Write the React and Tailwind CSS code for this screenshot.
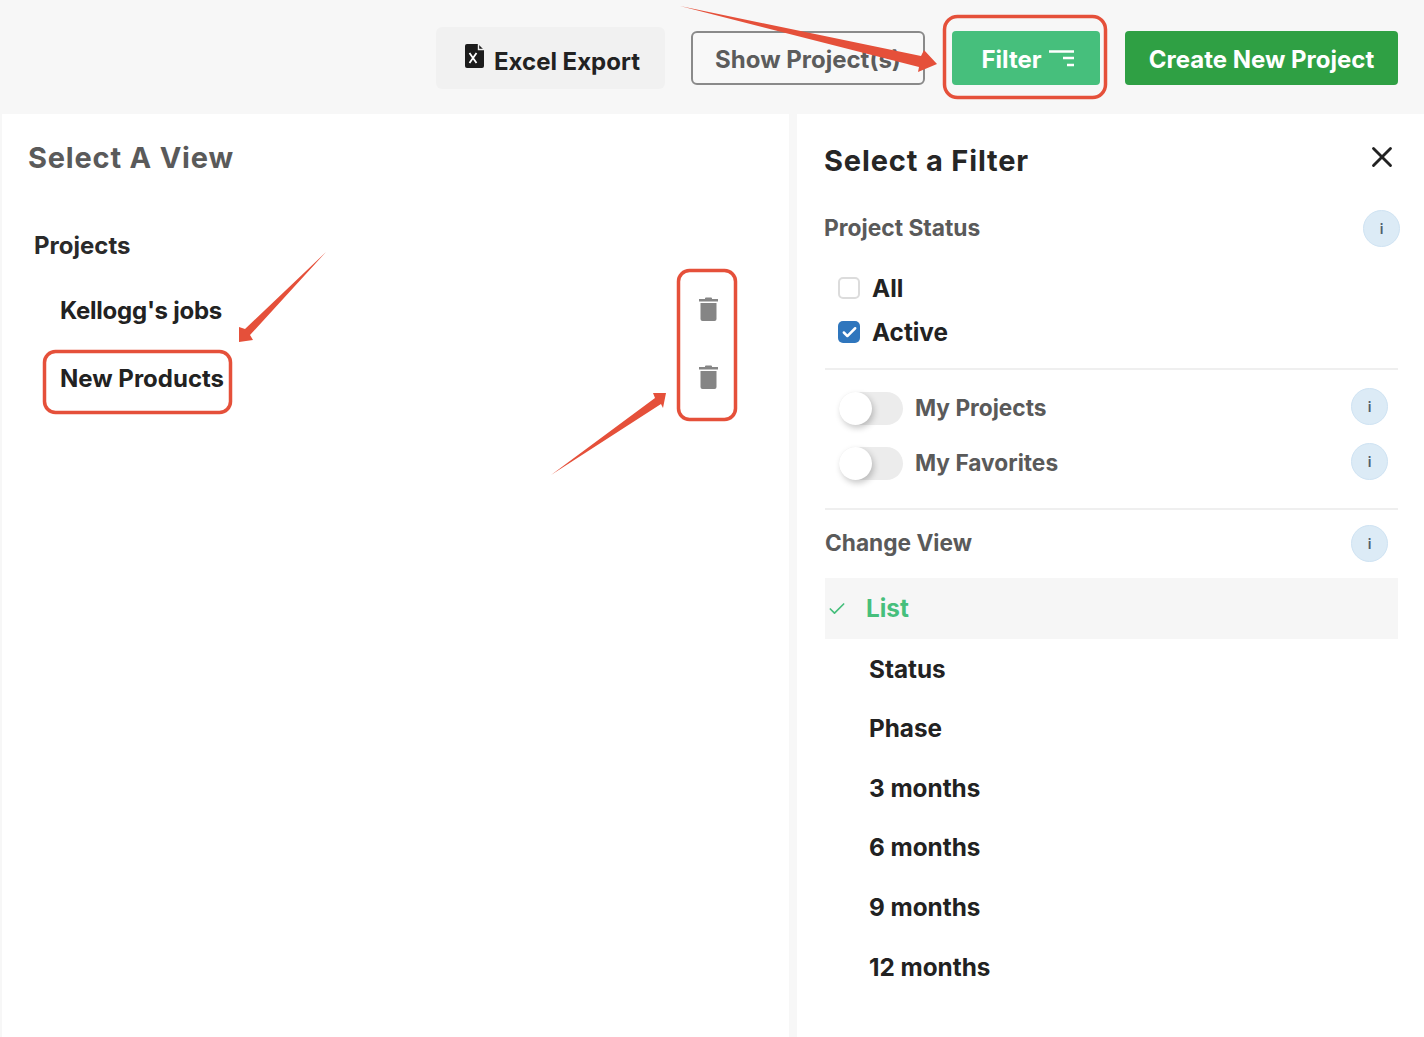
import { Check, X } from "lucide-react";

const views = ["Status", "Phase", "3 months", "6 months", "9 months", "12 months"];

function ExcelIcon() {
  return (
    <svg width="22" height="26" viewBox="0 0 22 26" className="mr-2 -mt-[12px]">
      <path d="M3 1h11l6 6v16a2 2 0 0 1-2 2H3a2 2 0 0 1-2-2V3a2 2 0 0 1 2-2z" fill="#1c1c1c" />
      <path d="M14.5 1v5.5H20" fill="none" stroke="#f1f1f1" strokeWidth="1.4" />
      <path d="M5.500 10l7 10M12.500 10l-7 10" stroke="#fff" strokeWidth="1.8" fill="none" />
    </svg>
  );
}

function FilterIcon() {
  return (
    <svg width="25" height="17" viewBox="0 0 25 17" className="ml-[7px] -mt-[2px]">
      <path d="M0 1.500h25M14 8h11M18 15h7" stroke="#fff" strokeWidth="2.400" fill="none" />
    </svg>
  );
}

function TrashIcon() {
  return (
    <svg width="21" height="26" viewBox="0 0 21 26" className="-mt-[4px]">
      <path d="M7 2.5a1 1 0 0 1 1-1h5a1 1 0 0 1 1 1V3h6v2.500H1V3h6z" fill="#858585" />
      <path d="M2.500 7h16v16a2 2 0 0 1-2 2h-12a2 2 0 0 1-2-2z" fill="#858585" />
    </svg>
  );
}

function InfoDot({ className = "" }) {
  return (
    <div className={`w-[37px] h-[37px] rounded-full bg-[#dcebf6] border border-[#cfe3f3] flex items-center justify-center text-[14px] leading-none text-[#4f5f6c] font-semibold ${className}`}>
      i
    </div>
  );
}

function ToggleRow({ label }) {
  return (
    <div className="flex items-center h-[37px]">
      <div className="relative mt-[4px] ml-[14px] w-[64px] h-[33px] rounded-full bg-[#ececec]">
        <div className="absolute left-0 top-0 w-[33px] h-[33px] rounded-full bg-white shadow-[2px_3px_6px_rgba(0,0,0,0.22)]" />
      </div>
      <span className="ml-3 mt-[4px] text-[22.700px] font-[650] text-[#5a5a5a]">{label}</span>
      <InfoDot className="ml-auto mr-[10px]" />
    </div>
  );
}

// red marks someone drew on top of the screenshot
function Annotations() {
  return (
    <svg width="1424" height="1037" viewBox="0 0 1424 1037" className="absolute left-0 top-0 pointer-events-none">
      <g fill="none" stroke="#e5503a" strokeWidth="3.500">
        <rect x="944.500" y="16.500" width="161" height="81" rx="13" />
        <rect x="44.500" y="351.500" width="186" height="61" rx="11" />
        <rect x="678.500" y="270.500" width="57" height="149" rx="11" />
      </g>
      <g fill="#e5503a">
        <polygon points="680,6 921,56 924,50 937,64 918,72 919,67" />
        <polygon points="326,252 245,329 239,327 239,342 253,340 250,335" />
        <polygon points="551,475 655,398 653,393 666,393 663,408 661,404" />
      </g>
    </svg>
  );
}

export default function App() {
  return (
    <div className="relative w-[1424px] h-[1037px] overflow-hidden bg-[#f7f7f7] font-['Inter',sans-serif] text-[#1f1f1f]">
      <header className="h-[114px] flex items-center justify-end pr-[26px]">
        <button className="flex items-center justify-center w-[229px] h-[62px] mt-[2px] pt-2 pl-[3px] rounded-md bg-[#f1f1f1] text-[24px] font-[650] text-[#222]">
          <ExcelIcon />
          Excel Export
        </button>
        <button className="ml-[26px] w-[234px] h-[54px] mt-[2px] pt-[3px] rounded-md border-2 border-[#8a8a8a] bg-[#f8f8f8] text-[24px] font-bold text-[#5c5c5c]">
          Show Project(s)
        </button>
        <button className="ml-[27px] pl-[3px] pt-[3px] flex items-center justify-center w-[148px] h-[54px] mt-[2px] rounded-sm bg-[#46bf7c] text-[24px] font-bold text-white">
          Filter
          <FilterIcon />
        </button>
        <button className="ml-[25px] w-[273px] h-[54px] mt-[2px] pt-[3px] rounded-sm bg-[#2fa044] text-[24px] font-bold text-white">
          Create New Project
        </button>
      </header>

      <div className="flex h-[923px] pl-[2px]">
        <section className="w-[787px] bg-white">
          <h2 className="mt-[23px] ml-[26px] text-[29px] leading-[42px] font-bold tracking-[0.8px] text-[#5a5a5a]">
            Select A View
          </h2>
          <div className="mt-[49px] ml-[32px] text-[24px] leading-[36px] font-[650] text-[#2a2a2a]">Projects</div>
          <div className="mt-[29px] flex items-center justify-between h-[36px] pl-[58px] pr-[70px] text-[24px] font-[650] text-[#222]">
            <span className="tracking-[-0.25px]">Kellogg's jobs</span>
            <TrashIcon />
          </div>
          <div className="mt-[32px] flex items-center justify-between h-[36px] pl-[58px] pr-[70px] text-[24px] font-[650] text-[#222]">
            <span>New Products</span>
            <TrashIcon />
          </div>
        </section>

        <section className="ml-[8px] w-[627px] bg-white pl-[27px] pr-[26px]">
          <div className="flex items-center justify-between h-[40px] mt-[27px]">
            <h2 className="text-[29px] font-bold tracking-[0.85px] text-[#262626]">Select a Filter</h2>
            <X size={34} strokeWidth={2} className="-mt-2 -mr-[1px] text-[#222]" />
          </div>
          <div className="flex items-center justify-between h-[37px] mt-[29px]">
            <span className="text-[22.800px] font-[650] text-[#5a5a5a]">Project Status</span>
            <InfoDot className="-mr-[2px]" />
          </div>
          <div className="mt-[24px] ml-[14px] flex items-center h-[34px]">
            <span className="w-[22px] h-[22px] rounded-[5px] border-2 border-[#dcdcdc] bg-white" />
            <span className="ml-3 text-[24.300px] font-[650] text-[#222]">All</span>
          </div>
          <div className="mt-[10px] ml-[14px] flex items-center h-[34px]">
            <span className="w-[22px] h-[22px] rounded-[5px] bg-[#2f76bd] flex items-center justify-center">
              <Check size={17} strokeWidth={3.5} className="text-white" />
            </span>
            <span className="ml-3 text-[24.300px] font-[650] text-[#222]">Active</span>
          </div>

          <div className="mt-[19px] ml-[1px] border-t-2 border-[#efefef] pt-[18px]">
            <ToggleRow label="My Projects" />
            <div className="mt-[18px]">
              <ToggleRow label="My Favorites" />
            </div>
          </div>

          <div className="mt-[28px] ml-[1px] border-t-2 border-[#efefef] pt-[15px]">
            <div className="flex items-center justify-between h-[37px]">
              <span className="text-[22.700px] font-[650] text-[#5a5a5a]">Change View</span>
              <InfoDot className="mr-[10px]" />
            </div>
          </div>

          <div className="mt-[16px] ml-[1px] h-[61px] bg-[#f6f6f6] flex items-center pl-[2px]">
            <Check size={20} strokeWidth={2} className="text-[#46bf7c]" />
            <span className="ml-[19px] text-[24.300px] font-[650] text-[#46bf7c]">List</span>
          </div>
          <ul className="pl-[45px] text-[24.300px] font-[650] text-[#222]">
            {views.map((v) => (
              <li key={v} className="h-[59.600px] flex items-center">{v}</li>
            ))}
          </ul>
        </section>
      </div>

      <Annotations />
    </div>
  );
}
